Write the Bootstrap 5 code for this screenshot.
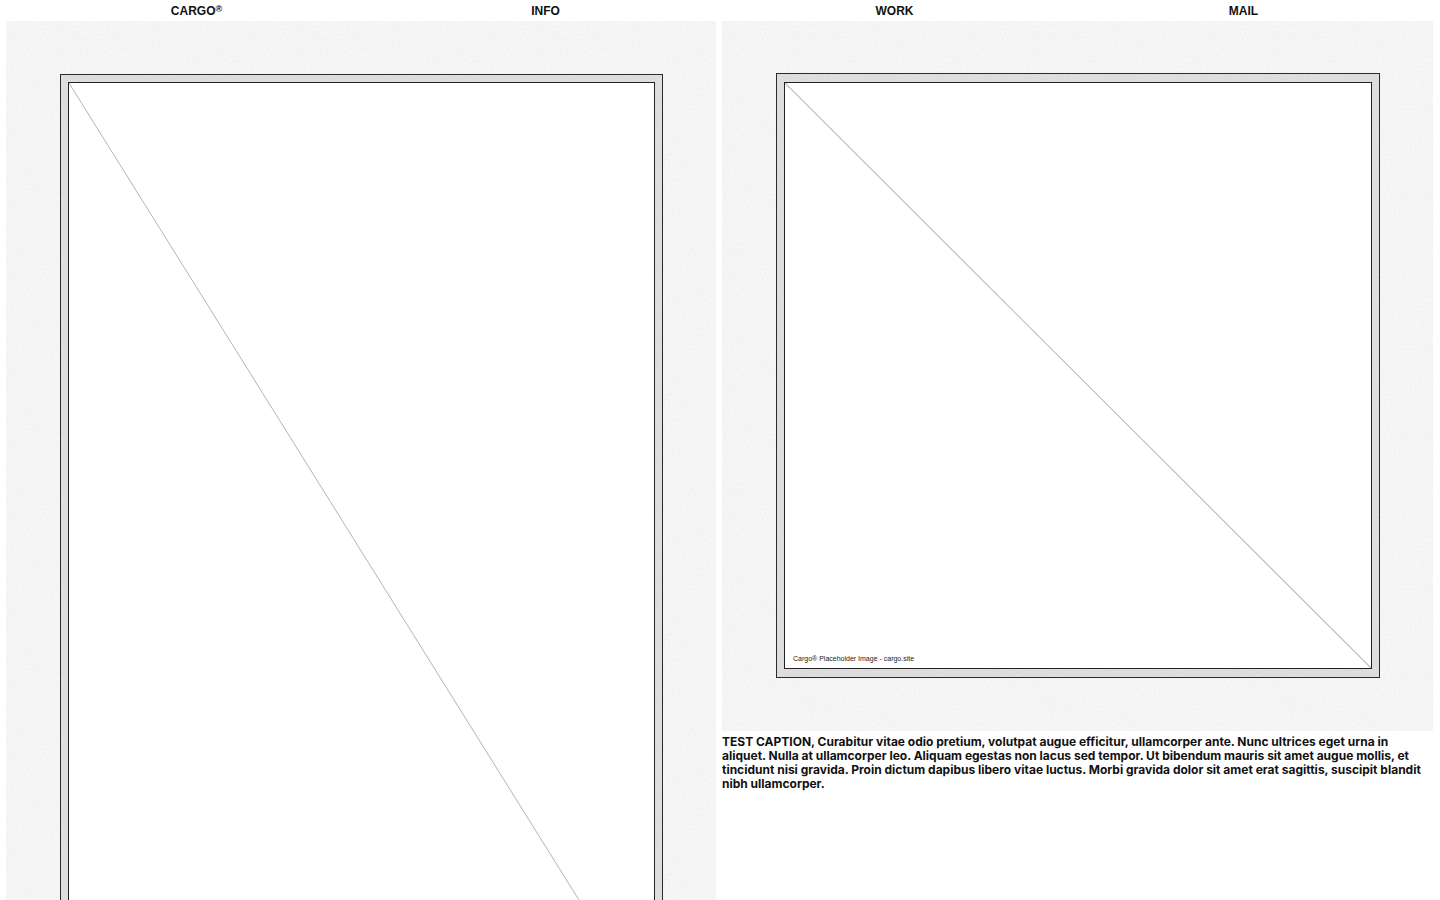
<!DOCTYPE html>
<html lang="en">
<head>
<meta charset="utf-8">
<meta name="viewport" content="width=device-width, initial-scale=1">
<title>Cargo</title>
<link href="https://cdn.jsdelivr.net/npm/bootstrap@5.3.0/dist/css/bootstrap.min.css" rel="stylesheet">
<style>
body { font-family: "Liberation Sans", Arial, sans-serif; font-size: 12px; line-height: 14px; font-weight: 700; color: #111; background: #fff; }
.site-nav { padding: 4px 22px 3px; }
.site-nav a { color: inherit; }
.site-nav sup { font-size: 9px; line-height: 0; top: -3px; vertical-align: baseline; }
.gallery { display: grid; grid-template-columns: 710fr 711fr; column-gap: 6px; padding: 0 7px 0 6px; align-items: start; }
.mat, .frame { background-image: url("data:image/svg+xml,%3Csvg xmlns='http://www.w3.org/2000/svg' width='240' height='240'%3E%3Cfilter id='n' x='0' y='0' width='100%25' height='100%25'%3E%3CfeTurbulence type='fractalNoise' baseFrequency='.4' numOctaves='3' stitchTiles='stitch'/%3E%3CfeColorMatrix values='.7 .7 0 0 -.2 .7 .7 0 0 -.2 .7 .7 0 0 -.2 0 0 0 0 1'/%3E%3C/filter%3E%3Crect width='240' height='240' filter='url(%23n)' opacity='.06'/%3E%3C/svg%3E"); }
.mat { background-color: #f8f8f8; padding: 52px 53px 53px 54px; }
.frame { background-color: #dfdfdf; border: 1px solid #2b2b2b; padding: 8px 7px; }
.mat-tall { padding-top: 53px; }
.mat-tall .frame { padding-top: 7px; }
.pane { border: 1px solid #222; aspect-ratio: 588 / 587; background: #fff; }
.pane-tall { aspect-ratio: 5 / 8; }
.pane svg { stroke: #b4b4b4; stroke-width: 1; }
.pane-note { left: 8px; bottom: 4px; font-size: 7px; line-height: 10px; font-weight: 400; color: #222; }
.caption-text { font-family: Inter, sans-serif; padding-top: 4px; }
</style>
</head>
<body>
<nav class="site-nav row row-cols-4 g-0 text-center">
  <div class="col"><a class="text-decoration-none" href="#cargo">CARGO<sup>®</sup></a></div>
  <div class="col"><a class="text-decoration-none" href="#info">INFO</a></div>
  <div class="col"><a class="text-decoration-none" href="#work">WORK</a></div>
  <div class="col"><a class="text-decoration-none" href="#mail">MAIL</a></div>
</nav>
<main class="gallery">
  <figure class="m-0">
    <div class="mat mat-tall">
      <div class="frame">
        <div class="pane pane-tall">
          <svg class="d-block w-100 h-100" viewBox="0 0 100 100" preserveAspectRatio="none" aria-hidden="true"><line x2="100" y2="100" vector-effect="non-scaling-stroke"/></svg>
        </div>
      </div>
    </div>
  </figure>
  <figure class="m-0">
    <div class="mat">
      <div class="frame">
        <div class="pane position-relative">
          <svg class="d-block w-100 h-100" viewBox="0 0 100 100" preserveAspectRatio="none" aria-hidden="true"><line x2="100" y2="100" vector-effect="non-scaling-stroke"/></svg>
          <span class="pane-note position-absolute">Cargo® Placeholder Image - cargo.site</span>
        </div>
      </div>
    </div>
    <figcaption class="caption-text">TEST CAPTION, Curabitur vitae odio pretium, volutpat augue efficitur, ullamcorper ante. Nunc ultrices eget urna in aliquet. Nulla at ullamcorper leo. Aliquam egestas non lacus sed tempor. Ut bibendum mauris sit amet augue mollis, et tincidunt nisi gravida. Proin dictum dapibus libero vitae luctus. Morbi gravida dolor sit amet erat sagittis, suscipit blandit nibh ullamcorper.</figcaption>
  </figure>
</main>
<script src="https://cdn.jsdelivr.net/npm/bootstrap@5.3.0/dist/js/bootstrap.bundle.min.js"></script>
</body>
</html>
